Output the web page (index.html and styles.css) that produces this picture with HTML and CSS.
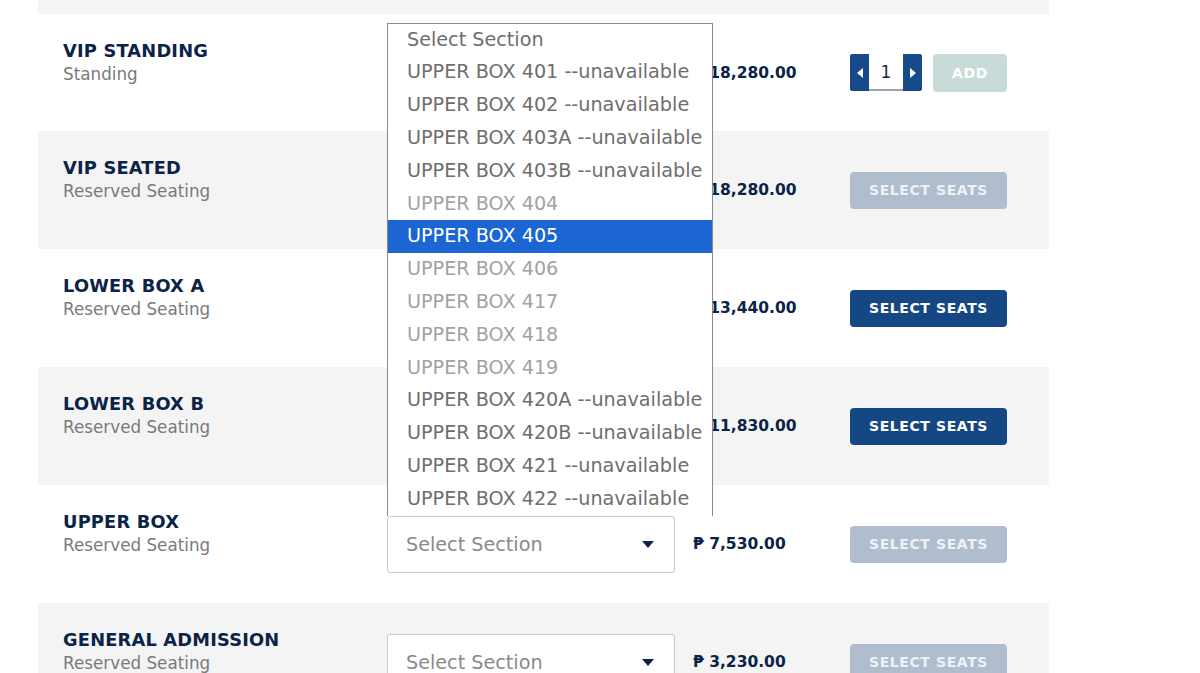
FILE: index.html
```html
<!DOCTYPE html>
<html lang="en">
<head>
    <meta charset="UTF-8">
    <meta name="viewport" content="width=device-width, initial-scale=1.0">
    <title>Ticket Sections</title>
    <link rel="stylesheet" href="styles.css">
</head>
<body>
    <div class="tickets">
        <div class="row-stub"></div>

        <div class="ticket-row first">
            <div class="ticket-name">
                <h3>VIP STANDING</h3>
                <p>Standing</p>
            </div>
            <div class="picker"></div>
            <div class="price">₱ 18,280.00</div>
            <div class="actions">
                <div class="stepper">
                    <button class="step">
                        <svg width="6" height="10" viewBox="0 0 6 10"><path d="M6 0 L0 5 L6 10 Z" fill="#fff"/></svg>
                    </button>
                    <span class="qty">1</span>
                    <button class="step">
                        <svg width="6" height="10" viewBox="0 0 6 10"><path d="M0 0 L6 5 L0 10 Z" fill="#fff"/></svg>
                    </button>
                </div>
                <button class="btn btn-add" disabled>ADD</button>
            </div>
        </div>

        <div class="ticket-row alt">
            <div class="ticket-name">
                <h3>VIP SEATED</h3>
                <p>Reserved Seating</p>
            </div>
            <div class="picker"></div>
            <div class="price">₱ 18,280.00</div>
            <div class="actions">
                <button class="btn btn-seats" disabled>SELECT SEATS</button>
            </div>
        </div>

        <div class="ticket-row">
            <div class="ticket-name">
                <h3>LOWER BOX A</h3>
                <p>Reserved Seating</p>
            </div>
            <div class="picker"></div>
            <div class="price">₱ 13,440.00</div>
            <div class="actions">
                <button class="btn btn-seats active">SELECT SEATS</button>
            </div>
        </div>

        <div class="ticket-row alt">
            <div class="ticket-name">
                <h3>LOWER BOX B</h3>
                <p>Reserved Seating</p>
            </div>
            <div class="picker"></div>
            <div class="price">₱ 11,830.00</div>
            <div class="actions">
                <button class="btn btn-seats active">SELECT SEATS</button>
            </div>
        </div>

        <div class="ticket-row">
            <div class="ticket-name">
                <h3>UPPER BOX</h3>
                <p>Reserved Seating</p>
            </div>
            <div class="picker">
                <ul class="listbox">
                    <li>Select Section</li>
                    <li>UPPER BOX 401 --unavailable</li>
                    <li>UPPER BOX 402 --unavailable</li>
                    <li>UPPER BOX 403A --unavailable</li>
                    <li>UPPER BOX 403B --unavailable</li>
                    <li class="open">UPPER BOX 404</li>
                    <li class="selected">UPPER BOX 405</li>
                    <li class="open">UPPER BOX 406</li>
                    <li class="open">UPPER BOX 417</li>
                    <li class="open">UPPER BOX 418</li>
                    <li class="open">UPPER BOX 419</li>
                    <li>UPPER BOX 420A --unavailable</li>
                    <li>UPPER BOX 420B --unavailable</li>
                    <li>UPPER BOX 421 --unavailable</li>
                    <li>UPPER BOX 422 --unavailable</li>
                </ul>
                <div class="select">
                    <span>Select Section</span>
                    <svg width="12" height="7" viewBox="0 0 12 7"><path d="M0 0 L12 0 L6 7 Z" fill="#0b2347"/></svg>
                </div>
            </div>
            <div class="price">₱ 7,530.00</div>
            <div class="actions">
                <button class="btn btn-seats" disabled>SELECT SEATS</button>
            </div>
        </div>

        <div class="ticket-row alt">
            <div class="ticket-name">
                <h3>GENERAL ADMISSION</h3>
                <p>Reserved Seating</p>
            </div>
            <div class="picker">
                <div class="select">
                    <span>Select Section</span>
                    <svg width="12" height="7" viewBox="0 0 12 7"><path d="M0 0 L12 0 L6 7 Z" fill="#0b2347"/></svg>
                </div>
            </div>
            <div class="price">₱ 3,230.00</div>
            <div class="actions">
                <button class="btn btn-seats" disabled>SELECT SEATS</button>
            </div>
        </div>
    </div>
</body>
</html>
```

FILE: styles.css
```css
* {
    box-sizing: border-box;
    margin: 0;
    padding: 0;
    font-family: 'DejaVu Sans', sans-serif;
}

body {
    background: #fff;
    overflow: hidden;
}

.tickets {
    width: 1011px;
    margin-left: 38px;
}

.row-stub {
    height: 14px;
    background: #f4f4f4;
}

.ticket-row {
    height: 118px;
    display: grid;
    grid-template-columns: 324px 288px 175px auto;
    align-items: center;
    padding-left: 25px;
}

.ticket-row.first {
    height: 117px;
}

.ticket-row.alt {
    background: #f4f4f4;
}

.ticket-name {
    align-self: start;
    padding-top: 25px;
}

.ticket-name h3 {
    color: #0b2347;
    font-size: 17.8px;
    font-weight: bold;
    line-height: 23px;
    letter-spacing: 0.2px;
}

.ticket-name p {
    color: #7a7a7a;
    font-size: 16.8px;
    line-height: 24px;
}

.picker {
    position: relative;
    height: 57px;
}

.select {
    height: 57px;
    background: #fff;
    border: 1px solid #c8c8c8;
    border-radius: 3px;
    display: flex;
    align-items: center;
    justify-content: space-between;
    padding: 0 20px 0 18px;
    color: #8a8a8a;
    font-size: 19.2px;
}

.listbox {
    list-style: none;
    position: absolute;
    left: 0;
    bottom: 100%;
    width: 326px;
    background: #fff;
    border: 1px solid #8a8a8a;
    border-bottom: none;
    z-index: 5;
}

.listbox li {
    height: 32.8px;
    line-height: 32.8px;
    padding-left: 19px;
    color: #6e6e6e;
    font-size: 19.2px;
    white-space: nowrap;
    overflow: hidden;
}

.listbox li.open {
    color: #a2a2a2;
}

.listbox li.selected {
    background: #1b66d2;
    color: #fff;
}

.price {
    padding-left: 18px;
    color: #0b2347;
    font-size: 15.5px;
    font-weight: bold;
}

.actions {
    display: flex;
    align-items: center;
    gap: 11px;
}

.stepper {
    display: flex;
    height: 37px;
    width: 72px;
    border-radius: 3px;
    overflow: hidden;
    background: #164a8a;
}

.step {
    width: 19px;
    background: #164a8a;
    border: none;
    display: flex;
    align-items: center;
    justify-content: center;
}

.qty {
    width: 34px;
    background: #fff;
    border-bottom: 2px solid #9aa6b5;
    color: #1a2a44;
    font-size: 17px;
    display: flex;
    align-items: center;
    justify-content: center;
}

.btn {
    border: none;
    border-radius: 4px;
    height: 37px;
    color: #fff;
    font-size: 14px;
    font-weight: bold;
    letter-spacing: 0.6px;
}

.btn-add {
    width: 74px;
    background: #c9dbd8;
    height: 38px;
}

.btn-seats {
    width: 157px;
    background: #b0bdcf;
    color: #eef1f6;
}

.btn-seats.active {
    background: #154785;
    color: #fff;
}
```
